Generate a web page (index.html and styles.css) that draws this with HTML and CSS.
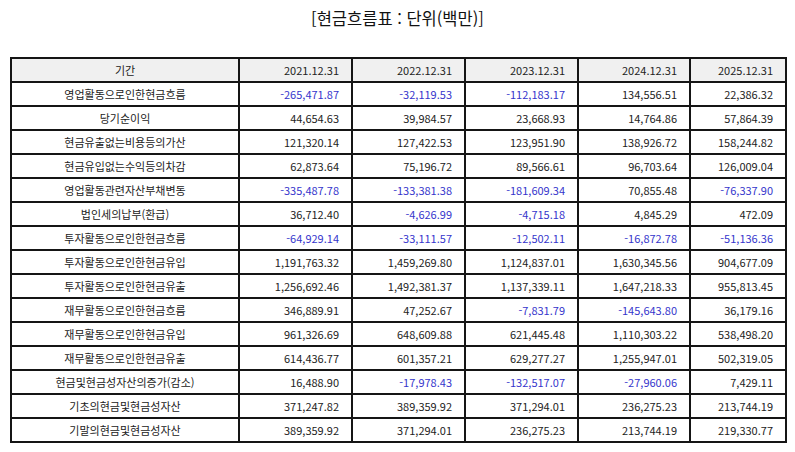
FILE: index.html
```html
<!DOCTYPE html>
<html lang="ko">
<head>
<meta charset="utf-8">
<link rel="stylesheet" href="styles.css">
</head>
<body>
<div class="page">
  <h1 class="title">[현금흐름표 : 단위(백만)]</h1>
  <table class="cf">
    <colgroup>
      <col class="c-label"><col class="c-num"><col class="c-num"><col class="c-num"><col class="c-num4"><col class="c-num5">
    </colgroup>
    <thead>
      <tr><th class="lbl">기간</th><th>2021.12.31</th><th>2022.12.31</th><th>2023.12.31</th><th>2024.12.31</th><th>2025.12.31</th></tr>
    </thead>
    <tbody>
      <tr><td class="lbl">영업활동으로인한현금흐름</td><td class="neg">-265,471.87</td><td class="neg">-32,119.53</td><td class="neg">-112,183.17</td><td>134,556.51</td><td>22,386.32</td></tr>
      <tr><td class="lbl">당기순이익</td><td>44,654.63</td><td>39,984.57</td><td>23,668.93</td><td>14,764.86</td><td>57,864.39</td></tr>
      <tr><td class="lbl">현금유출없는비용등의가산</td><td>121,320.14</td><td>127,422.53</td><td>123,951.90</td><td>138,926.72</td><td>158,244.82</td></tr>
      <tr><td class="lbl">현금유입없는수익등의차감</td><td>62,873.64</td><td>75,196.72</td><td>89,566.61</td><td>96,703.64</td><td>126,009.04</td></tr>
      <tr><td class="lbl">영업활동관련자산부채변동</td><td class="neg">-335,487.78</td><td class="neg">-133,381.38</td><td class="neg">-181,609.34</td><td>70,855.48</td><td class="neg">-76,337.90</td></tr>
      <tr><td class="lbl">법인세의납부(환급)</td><td>36,712.40</td><td class="neg">-4,626.99</td><td class="neg">-4,715.18</td><td>4,845.29</td><td>472.09</td></tr>
      <tr><td class="lbl">투자활동으로인한현금흐름</td><td class="neg">-64,929.14</td><td class="neg">-33,111.57</td><td class="neg">-12,502.11</td><td class="neg">-16,872.78</td><td class="neg">-51,136.36</td></tr>
      <tr><td class="lbl">투자활동으로인한현금유입</td><td>1,191,763.32</td><td>1,459,269.80</td><td>1,124,837.01</td><td>1,630,345.56</td><td>904,677.09</td></tr>
      <tr><td class="lbl">투자활동으로인한현금유출</td><td>1,256,692.46</td><td>1,492,381.37</td><td>1,137,339.11</td><td>1,647,218.33</td><td>955,813.45</td></tr>
      <tr><td class="lbl">재무활동으로인한현금흐름</td><td>346,889.91</td><td>47,252.67</td><td class="neg">-7,831.79</td><td class="neg">-145,643.80</td><td>36,179.16</td></tr>
      <tr><td class="lbl">재무활동으로인한현금유입</td><td>961,326.69</td><td>648,609.88</td><td>621,445.48</td><td>1,110,303.22</td><td>538,498.20</td></tr>
      <tr><td class="lbl">재무활동으로인한현금유출</td><td>614,436.77</td><td>601,357.21</td><td>629,277.27</td><td>1,255,947.01</td><td>502,319.05</td></tr>
      <tr><td class="lbl">현금및현금성자산의증가(감소)</td><td>16,488.90</td><td class="neg">-17,978.43</td><td class="neg">-132,517.07</td><td class="neg">-27,960.06</td><td>7,429.11</td></tr>
      <tr><td class="lbl">기초의현금및현금성자산</td><td>371,247.82</td><td>389,359.92</td><td>371,294.01</td><td>236,275.23</td><td>213,744.19</td></tr>
      <tr><td class="lbl">기말의현금및현금성자산</td><td>389,359.92</td><td>371,294.01</td><td>236,275.23</td><td>213,744.19</td><td>219,330.77</td></tr>
    </tbody>
  </table>
</div>
</body>
</html>
```

FILE: styles.css
```css
* { box-sizing: border-box; }
html, body {
  margin: 0;
  padding: 0;
  background: #ffffff;
}
body {
  font-family: "Noto Sans CJK KR", "Noto Sans", sans-serif;
  color: #222222;
}
.page {
  padding: 8px 10px 0 10px;
}
.title {
  margin: 0;
  height: 49px;
  line-height: 20px;
  font-size: 16.5px;
  font-weight: 400;
  text-align: center;
  color: #111111;
}
.cf {
  width: 775px;
  border-collapse: collapse;
  table-layout: fixed;
  font-size: 11px;
}
.c-label { width: 228px; }
.c-num { width: 113px; }
.c-num4 { width: 112px; }
.c-num5 { width: 96px; }
.cf th, .cf td {
  border: 2px solid #151515;
  height: 24px;
  padding: 0 12px 0 6px;
  text-align: right;
  font-weight: 400;
  line-height: 20px;
  white-space: nowrap;
  overflow: hidden;
}
.cf thead th {
  background: #f0f0f0;
}
.cf .lbl {
  text-align: center;
  padding: 0 6px;
}
.cf .neg {
  color: #3535cc;
}
```
